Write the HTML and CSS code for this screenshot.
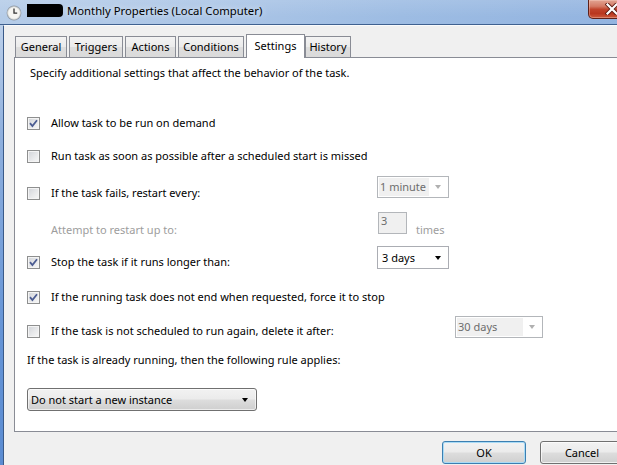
FILE: index.html
```html
<!DOCTYPE html>
<html>
<head>
<meta charset="utf-8">
<title>Monthly Properties (Local Computer)</title>
<link rel="stylesheet" href="styles.css">
</head>
<body>
<div class="window">
  <div class="titlebar">
    <svg class="app-icon" width="16" height="16" viewBox="0 0 16 16">
      <circle cx="8" cy="8" r="7.4" fill="#8e98a4"/>
      <circle cx="8" cy="8" r="6.3" fill="#f5f5f2" stroke="#d3d5d3" stroke-width="0.8"/>
      <path d="M8 3.6V8.2H11.2" stroke="#333" stroke-width="1.3" fill="none"/>
    </svg>
    <span class="redact"></span>
    <span class="title">Monthly Properties (Local Computer)</span>
    <div class="close">
      <svg width="14" height="12" viewBox="0 0 14 12">
        <path d="M2.5 1.5L11.5 10.5M11.5 1.5L2.5 10.5" stroke="#5a1a12" stroke-width="4" stroke-linecap="square"/>
        <path d="M2.5 1.5L11.5 10.5M11.5 1.5L2.5 10.5" stroke="#ffffff" stroke-width="2.2" stroke-linecap="square"/>
      </svg>
    </div>
  </div>
  <div class="frame">
    <div class="client">
      <div class="tabs">
        <div class="tab t-general">General</div>
        <div class="tab t-triggers">Triggers</div>
        <div class="tab t-actions">Actions</div>
        <div class="tab t-conditions">Conditions</div>
        <div class="tab t-settings active">Settings</div>
        <div class="tab t-history">History</div>
      </div>
      <div class="panel">
        <div class="intro">Specify additional settings that affect the behavior of the task.</div>

        <div class="row r1">
          <span class="cb checked"><svg width="11" height="11" viewBox="0 0 11 11"><path d="M2 5.2L4.4 8L9 2.2" stroke="#4b5c92" stroke-width="1.8" fill="none"/></svg></span>
          <span class="label">Allow task to be run on demand</span>
        </div>

        <div class="row r2">
          <span class="cb"></span>
          <span class="label">Run task as soon as possible after a scheduled start is missed</span>
        </div>

        <div class="row r3">
          <span class="cb"></span>
          <span class="label w-mid">If the task fails, restart every:</span>
          <div class="combo disabled up7">
            <span class="val">1 minute</span>
            <span class="arrow"></span>
          </div>
        </div>

        <div class="row r4">
          <span class="spacer"></span>
          <span class="label w-spin muted">Attempt to restart up to:</span>
          <div class="spin up8">3</div>
          <span class="times muted">times</span>
        </div>

        <div class="row r5">
          <span class="cb checked"><svg width="11" height="11" viewBox="0 0 11 11"><path d="M2 5.2L4.4 8L9 2.2" stroke="#4b5c92" stroke-width="1.8" fill="none"/></svg></span>
          <span class="label w-mid">Stop the task if it runs longer than:</span>
          <div class="combo enabled up6">
            <span class="val">3 days</span>
            <span class="arrow"></span>
          </div>
        </div>

        <div class="row r6">
          <span class="cb checked"><svg width="11" height="11" viewBox="0 0 11 11"><path d="M2 5.2L4.4 8L9 2.2" stroke="#4b5c92" stroke-width="1.8" fill="none"/></svg></span>
          <span class="label">If the running task does not end when requested, force it to stop</span>
        </div>

        <div class="row r7">
          <span class="cb"></span>
          <span class="label w-wide">If the task is not scheduled to run again, delete it after:</span>
          <div class="combo disabled wide up5">
            <span class="val">30 days</span>
            <span class="arrow"></span>
          </div>
        </div>

        <div class="row r8">
          <span class="label">If the task is already running, then the following rule applies:</span>
        </div>

        <div class="bigcombo">
          <span class="val">Do not start a new instance</span>
          <span class="arrow"></span>
        </div>
      </div>
      <div class="buttons">
        <div class="btn default">OK</div>
        <div class="btn">Cancel</div>
      </div>
    </div>
  </div>
</div>
</body>
</html>
```
FILE: styles.css
```css
* { box-sizing: border-box; }
html, body { margin: 0; padding: 0; }
body {
  width: 617px;
  height: 465px;
  overflow: hidden;
  font-family: "Noto Sans", "Segoe UI", sans-serif;
  font-size: 11px;
  color: #000;
  background: #f0f0f0;
}
.window {
  width: 617px;
  height: 465px;
  display: flex;
  flex-direction: column;
  overflow: hidden;
}

/* Title bar */
.titlebar {
  height: 25px;
  flex: none;
  display: flex;
  align-items: flex-start;
  border-bottom: 1px solid #3f6190;
  background:
    linear-gradient(180deg, rgba(255,255,255,0.12), rgba(255,255,255,0) 70%),
    linear-gradient(90deg, #b5cce8 0%, #abc5e6 35%, #9dbce3 65%, #93b4e0 100%);
}
.app-icon { flex: none; margin: 5px 0 0 6px; }
.redact {
  flex: none;
  width: 36px;
  height: 13px;
  margin: 4px 0 0 5px;
  background: #000;
  border-radius: 0 4px 4px 0;
}
.title {
  margin: 3px 0 0 4px;
  font-size: 11.3px;
  line-height: 16px;
  color: #000;
  text-shadow: 0 0 6px rgba(255,255,255,0.9);
  white-space: nowrap;
}
.close {
  flex: none;
  margin-left: auto;
  margin-right: -19px;
  width: 48px;
  height: 19px;
  border: 1px solid #5e2019;
  border-top: none;
  border-radius: 0 0 0 5px;
  background: linear-gradient(180deg, #e2a493 0%, #d47a65 35%, #c0432b 52%, #b9371f 75%, #cc5a3c 100%);
  display: flex;
  align-items: center;
  justify-content: center;
  box-shadow: inset 0 0 0 1px rgba(255,220,210,0.35);
}

/* Frame */
.frame {
  flex: 1;
  display: flex;
  padding-left: 3px;
  background: linear-gradient(180deg, #bcd0ea 0%, #8fb0de 25%, #6594d6 70%, #5b8cd2 100%);
}
.client {
  flex: 1;
  min-width: 0;
  display: flex;
  flex-direction: column;
  border-left: 1px solid #3a5a88;
  border-top: 1px solid #fafbfc;
  background: #f0f0f0;
  padding-left: 10px;
  overflow: hidden;
}

/* Tabs */
.tabs {
  flex: none;
  display: flex;
  align-items: flex-end;
  height: 23px;
  margin-top: 8px;
}
.tab {
  flex: none;
  height: 21px;
  line-height: 20px;
  text-align: center;
  border: 1px solid #898c95;
  border-bottom: none;
  background: linear-gradient(180deg, #f3f3f3 0%, #ebebeb 50%, #dedede 51%, #dadada 100%);
  white-space: nowrap;
}
.t-general { margin-left: 1px; width: 52px; }
.t-triggers { margin-left: 2px; width: 54px; }
.t-actions { margin-left: 2px; width: 51px; }
.t-conditions { margin-left: 2px; width: 66px; }
.t-settings { margin-left: 2px; width: 59px; }
.t-history { margin-left: 0; width: 46px; }
.tab.active {
  height: 24px;
  line-height: 21px;
  margin-bottom: -1px;
  background: #fff;
  position: relative;
  z-index: 1;
}

/* Panel */
.panel {
  flex: none;
  align-self: flex-start;
  width: 620px;
  border: 1px solid #898c95;
  border-right: none;
  background: #fff;
  padding: 0 0 20px 12px;
}
.intro {
  margin: 7px 0 0 3px;
  line-height: 16px;
  white-space: nowrap;
}
.row {
  display: flex;
  align-items: center;
  height: 20px;
  line-height: 20px;
}
.r1 { margin-top: 32px; }
.r2 { margin-top: 13px; }
.r3 { margin-top: 17px; }
.r4 { margin-top: 17px; }
.r5 { margin-top: 12px; }
.r6 { margin-top: 15px; }
.r7 { margin-top: 14px; }
.r8 { margin-top: 9px; }

.cb {
  flex: none;
  width: 13px;
  height: 13px;
  margin-right: 11px;
  border: 1px solid #8e8f8f;
  background: linear-gradient(135deg, #d0d3d8 0%, #e6e7e9 50%, #f8f8f8 100%);
  box-shadow: inset 0 0 0 1px #f4f4f4;
  display: flex;
  align-items: center;
  justify-content: center;
}
.spacer { flex: none; width: 24px; }
.label { flex: none; white-space: nowrap; }
.w-mid { width: 326px; }
.w-spin { width: 327px; }
.w-wide { width: 404px; }
.muted { color: #9d9d9d; }

.combo {
  flex: none;
  align-self: flex-start;
  display: flex;
  width: 72px;
  height: 22px;
  border: 1px solid #abadb3;
  background: #fff;
  padding: 1px;
}
.combo.wide { width: 88px; }
.combo .val {
  flex: 1;
  line-height: 18px;
  padding-left: 1px;
  white-space: nowrap;
}
.combo .arrow {
  flex: none;
  width: 18px;
  display: flex;
  align-items: center;
  justify-content: center;
}
.combo .arrow::after, .bigcombo .arrow::after {
  content: "";
  border-left: 3.5px solid transparent;
  border-right: 3.5px solid transparent;
  border-top: 4px solid #000;
}
.combo.disabled { border-color: #b3b6ba; }
.combo.disabled .val { background: #f0f0f0; color: #6d6d6d; }
.combo.disabled .arrow::after { border-top-color: #b0b0b0; }
.combo.enabled { height: 23px; }
.combo.enabled .val { padding-left: 3px; line-height: 19px; }
.up7 { margin-top: -7px; }
.up6 { margin-top: -6px; }
.up5 { margin-top: -5px; }
.up8 { margin-top: -8px; }

.spin {
  flex: none;
  align-self: flex-start;
  width: 29px;
  height: 22px;
  border: 1px solid #b3b6ba;
  background: #f0f0f0;
  color: #6d6d6d;
  line-height: 15px;
  padding-left: 2px;
}
.times { margin-left: 9px; }

.bigcombo {
  margin-top: 18px;
  width: 230px;
  height: 23px;
  display: flex;
  align-items: center;
  border: 1px solid #707070;
  border-radius: 3px;
  background: linear-gradient(180deg, #f2f2f2 0%, #ebebeb 48%, #dddddd 52%, #cfcfcf 100%);
  box-shadow: inset 0 0 0 1px rgba(255,255,255,0.6);
  padding-left: 3px;
}
.bigcombo .val { flex: 1; white-space: nowrap; }
.bigcombo .arrow {
  flex: none;
  width: 18px;
  display: flex;
  justify-content: center;
  margin-right: 2px;
}

/* Buttons */
.buttons {
  flex: none;
  display: flex;
  gap: 14px;
  margin-top: 9px;
  padding-left: 428px;
}
.btn {
  flex: none;
  width: 84px;
  height: 23px;
  line-height: 21px;
  text-align: center;
  border: 1px solid #707070;
  border-radius: 3px;
  background: linear-gradient(180deg, #f2f2f2 0%, #ebebeb 48%, #dddddd 52%, #cfcfcf 100%);
  box-shadow: inset 0 0 0 1px rgba(255,255,255,0.7);
}
.btn.default {
  border-color: #3c7fb1;
  box-shadow: inset 0 0 0 1px #a9dbf6;
}
```
